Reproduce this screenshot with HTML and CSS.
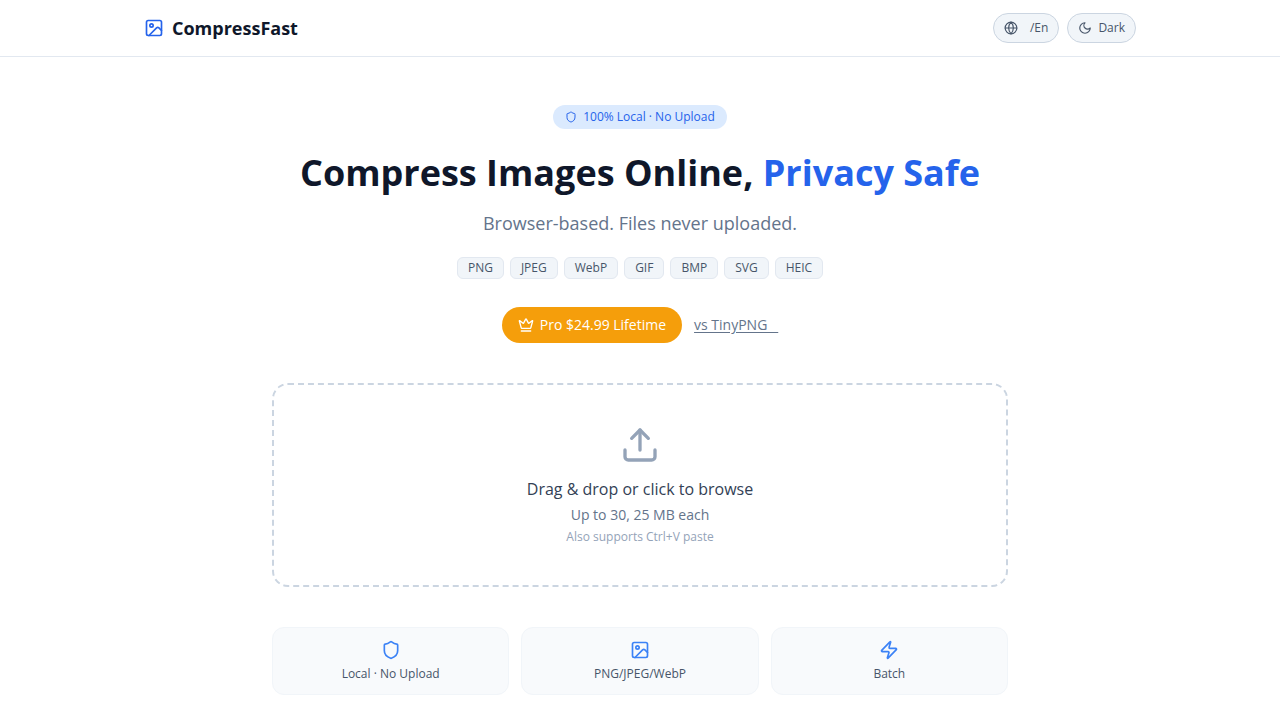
FILE: index.html
```html
<!DOCTYPE html>
<html lang="en">
<head>
  <meta charset="UTF-8">
  <meta name="viewport" content="width=device-width, initial-scale=1.0">
  <title>CompressFast</title>
  <link rel="stylesheet" href="styles.css">
</head>
<body>
  <header class="header">
    <div class="header-inner">
      <a class="logo" href="#">
        <svg class="icon icon-20" viewBox="0 0 24 24"><rect x="3" y="3" width="18" height="18" rx="2"/><circle cx="9" cy="9" r="2"/><path d="m21 15-3.086-3.086a2 2 0 0 0-2.828 0L6 21"/></svg>
        <span>CompressFast</span>
      </a>
      <div class="header-actions">
        <button class="pill-btn" type="button">
          <svg class="icon icon-14" viewBox="0 0 24 24"><circle cx="12" cy="12" r="10"/><path d="M12 2a14.5 14.5 0 0 0 0 20 14.5 14.5 0 0 0 0-20"/><path d="M2 12h20"/></svg>
          <span>&nbsp;&nbsp;/En</span>
        </button>
        <button class="pill-btn" type="button">
          <svg class="icon icon-14" viewBox="0 0 24 24"><path d="M12 3a6 6 0 0 0 9 9 9 9 0 1 1-9-9Z"/></svg>
          <span>Dark</span>
        </button>
      </div>
    </div>
  </header>

  <main class="main">
    <section class="hero">
      <div class="badge">
        <svg class="icon icon-12" viewBox="0 0 24 24"><path d="M20 13c0 5-3.5 7.5-7.66 8.95a1 1 0 0 1-.67-.01C7.5 20.5 4 18 4 13V6a1 1 0 0 1 1-1c2 0 4.5-1.2 6.24-2.72a1.17 1.17 0 0 1 1.52 0C14.51 3.81 17 5 19 5a1 1 0 0 1 1 1z"/></svg>
        <span>100% Local · No Upload</span>
      </div>
      <h1 class="title">Compress Images Online, <span class="accent">Privacy Safe</span></h1>
      <p class="subtitle">Browser-based. Files never uploaded.</p>
      <ul class="formats">
        <li>PNG</li>
        <li>JPEG</li>
        <li>WebP</li>
        <li>GIF</li>
        <li>BMP</li>
        <li>SVG</li>
        <li>HEIC</li>
      </ul>
      <div class="cta">
        <a class="pro-btn" href="#">
          <svg class="icon icon-16" viewBox="0 0 24 24"><path d="M11.562 3.266a.5.5 0 0 1 .876 0L15.39 8.87a1 1 0 0 0 1.516.294L21.183 5.5a.5.5 0 0 1 .798.519l-2.834 10.246a1 1 0 0 1-.956.734H5.81a1 1 0 0 1-.957-.734L2.02 6.02a.5.5 0 0 1 .798-.519l4.276 3.664a1 1 0 0 0 1.516-.294z"/><path d="M5 21h14"/></svg>
          <span>Pro $24.99 Lifetime</span>
        </a>
        <a class="vs-link" href="#">vs TinyPNG&nbsp;&nbsp;&nbsp;</a>
      </div>
    </section>

    <button class="dropzone" type="button">
      <svg class="icon icon-40" viewBox="0 0 24 24"><path d="M21 15v4a2 2 0 0 1-2 2H5a2 2 0 0 1-2-2v-4"/><path d="m17 8-5-5-5 5"/><path d="M12 3v12"/></svg>
      <span class="drop-title">Drag &amp; drop or click to browse</span>
      <span class="drop-limit">Up to 30, 25 MB each</span>
      <span class="drop-hint">Also supports Ctrl+V paste</span>
    </button>

    <section class="features">
      <div class="feature">
        <svg class="icon icon-20" viewBox="0 0 24 24"><path d="M20 13c0 5-3.5 7.5-7.66 8.95a1 1 0 0 1-.67-.01C7.5 20.5 4 18 4 13V6a1 1 0 0 1 1-1c2 0 4.5-1.2 6.24-2.72a1.17 1.17 0 0 1 1.52 0C14.51 3.81 17 5 19 5a1 1 0 0 1 1 1z"/></svg>
        <span>Local · No Upload</span>
      </div>
      <div class="feature">
        <svg class="icon icon-20" viewBox="0 0 24 24"><rect x="3" y="3" width="18" height="18" rx="2"/><circle cx="9" cy="9" r="2"/><path d="m21 15-3.086-3.086a2 2 0 0 0-2.828 0L6 21"/></svg>
        <span>PNG/JPEG/WebP</span>
      </div>
      <div class="feature">
        <svg class="icon icon-20" viewBox="0 0 24 24"><path d="M4 14a1 1 0 0 1-.78-1.63l9.9-10.2a.5.5 0 0 1 .86.46l-1.92 6.02A1 1 0 0 0 13 10h7a1 1 0 0 1 .78 1.63l-9.9 10.2a.5.5 0 0 1-.86-.46l1.92-6.02A1 1 0 0 0 11 14z"/></svg>
        <span>Batch</span>
      </div>
    </section>
  </main>
</body>
</html>
```
FILE: styles.css
```css
* {
  box-sizing: border-box;
  margin: 0;
  padding: 0;
}

body {
  font-family: "Open Sans", sans-serif;
  font-size: 14px;
  line-height: 20px;
  color: #0f172a;
  background: #fff;
}

button {
  font-family: inherit;
  cursor: pointer;
}

a {
  color: inherit;
  text-decoration: none;
}

.icon {
  flex-shrink: 0;
  fill: none;
  stroke: currentColor;
  stroke-width: 2;
  stroke-linecap: round;
  stroke-linejoin: round;
}

.icon-12 { width: 12px; height: 12px; }
.icon-14 { width: 14px; height: 14px; }
.icon-16 { width: 16px; height: 16px; }
.icon-20 { width: 20px; height: 20px; }
.icon-40 { width: 40px; height: 40px; }

/* Header */
.header {
  border-bottom: 1px solid #e2e8f0;
}

.header-inner {
  display: flex;
  align-items: center;
  justify-content: space-between;
  max-width: 1024px;
  height: 56px;
  margin: 0 auto;
  padding: 0 16px;
}

.logo {
  display: flex;
  align-items: center;
  gap: 8px;
  font-size: 18px;
  font-weight: 700;
  line-height: 28px;
}

.logo .icon {
  color: #2563eb;
}

.header-actions {
  display: flex;
  gap: 8px;
}

.pill-btn {
  display: flex;
  align-items: center;
  gap: 6px;
  padding: 6px 10px;
  font-size: 12px;
  line-height: 16px;
  color: #475569;
  background: #f1f5f9;
  border: 1px solid #cbd5e1;
  border-radius: 999px;
}

/* Hero */
.main {
  max-width: 768px;
  margin: 0 auto;
  padding: 48px 16px 24px;
}

.hero {
  display: flex;
  flex-direction: column;
  align-items: center;
  margin-bottom: 40px;
  text-align: center;
}

.badge {
  display: flex;
  align-items: center;
  gap: 6px;
  margin-bottom: 20px;
  padding: 4px 12px;
  font-size: 12px;
  line-height: 16px;
  color: #2563eb;
  background: #dbeafe;
  border-radius: 999px;
}

.title {
  margin-bottom: 12px;
  font-size: 36px;
  font-weight: 700;
  line-height: 48px;
}

.accent {
  color: #2563eb;
}

.subtitle {
  margin-bottom: 20px;
  font-size: 18px;
  line-height: 28px;
  color: #64748b;
}

.formats {
  display: flex;
  flex-wrap: wrap;
  justify-content: center;
  gap: 6px;
  margin-bottom: 28px;
  list-style: none;
}

.formats li {
  padding: 2px 10px;
  font-size: 12px;
  line-height: 16px;
  color: #475569;
  background: #f1f5f9;
  border: 1px solid #e2e8f0;
  border-radius: 6px;
}

.cta {
  display: flex;
  flex-wrap: wrap;
  align-items: center;
  justify-content: center;
  gap: 12px;
}

.pro-btn {
  display: flex;
  align-items: center;
  gap: 6px;
  padding: 8px 16px;
  color: #fff;
  background: #f59e0b;
  border-radius: 999px;
}

.vs-link {
  color: #64748b;
  text-decoration: underline;
  text-underline-offset: 2px;
}

/* Upload area */
.dropzone {
  display: flex;
  flex-direction: column;
  align-items: center;
  gap: 4px;
  width: 100%;
  margin-bottom: 40px;
  padding: 40px;
  background: transparent;
  border: 2px dashed #cbd5e1;
  border-radius: 16px;
}

.dropzone .icon {
  margin-bottom: 8px;
  color: #94a3b8;
}

.drop-title {
  font-size: 16px;
  line-height: 24px;
  color: #334155;
}

.drop-limit {
  font-size: 14px;
  line-height: 20px;
  color: #64748b;
}

.drop-hint {
  font-size: 12px;
  line-height: 16px;
  color: #94a3b8;
}

/* Features */
.features {
  display: grid;
  grid-template-columns: repeat(3, 1fr);
  gap: 12px;
}

.feature {
  display: flex;
  flex-direction: column;
  align-items: center;
  gap: 6px;
  padding: 12px;
  font-size: 12px;
  line-height: 16px;
  color: #475569;
  background: #f8fafc;
  border: 1px solid #f1f5f9;
  border-radius: 12px;
}

.feature .icon {
  color: #3b82f6;
}
```
